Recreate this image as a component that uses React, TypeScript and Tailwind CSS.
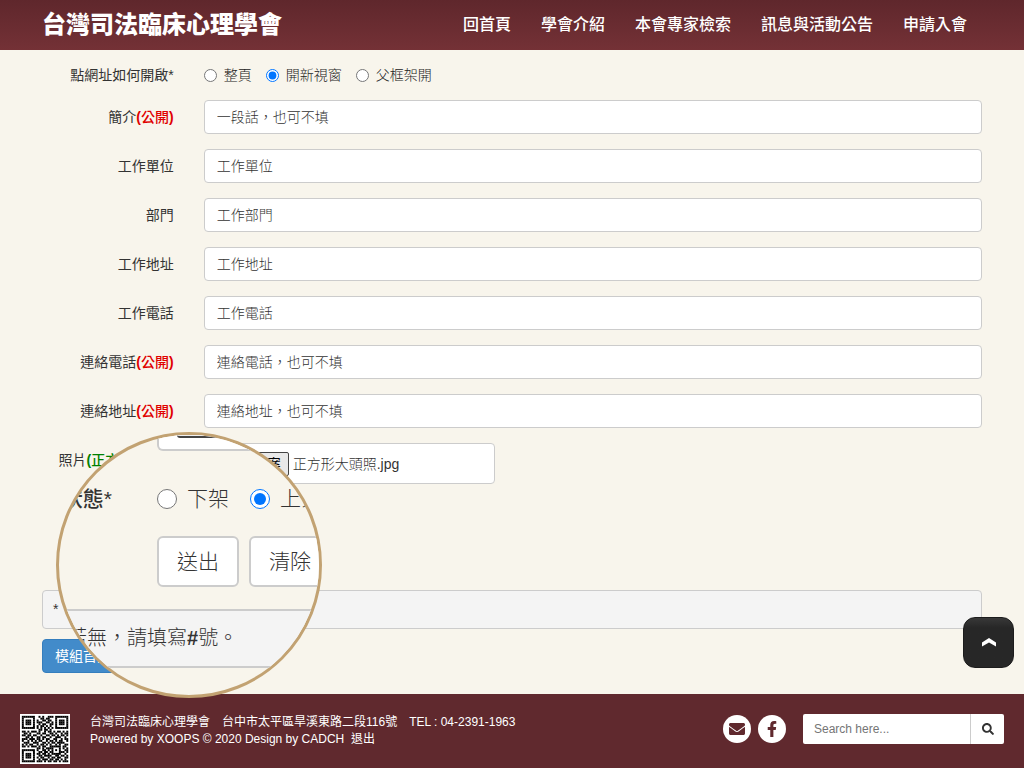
import { FaEnvelope, FaFacebookF, FaSearch } from "react-icons/fa";

const navItems = ["回首頁", "學會介紹", "本會專家檢索", "訊息與活動公告", "申請入會"];

const targets = [
    { id: "blank-self", label: "整頁" },
    { id: "blank-new", label: "開新視窗" },
    { id: "blank-parent", label: "父框架開" },
];

const fields = [
    { id: "intro", label: "簡介", isPublic: true, placeholder: "一段話，也可不填" },
    { id: "company", label: "工作單位", isPublic: false, placeholder: "工作單位" },
    { id: "department", label: "部門", isPublic: false, placeholder: "工作部門" },
    { id: "address", label: "工作地址", isPublic: false, placeholder: "工作地址" },
    { id: "office-tel", label: "工作電話", isPublic: false, placeholder: "工作電話" },
    { id: "tel", label: "連絡電話", isPublic: true, placeholder: "連絡電話，也可不填" },
    { id: "contact", label: "連絡地址", isPublic: true, placeholder: "連絡地址，也可不填" },
];

const qrRows = [
    "1111111001010011101111111",
    "1000001000110110001000001",
    "1011101010011011001011101",
    "1011101011100110101011101",
    "1011101001011001101011101",
    "1000001010110101001000001",
    "1111111010101010101111111",
    "0000000001101101000000000",
    "1101011101001011010110101",
    "0110100011011001101001011",
    "1101101100100110110101101",
    "0011010011011001001110010",
    "1110111011010110011001011",
    "1001010101100101101011001",
    "0111001110011010110111100",
    "1010110010110101001010011",
    "1101011101011001111110110",
    "0000000011010111100010101",
    "1111111010011010101010011",
    "1000001001101101100011101",
    "1011101011011010111110010",
    "1011101001101111001101101",
    "1011101010110010110110011",
    "1000001001011101101101010",
    "1111111011101011011010111",
];

function QrCode() {
    return (
        <svg viewBox="-1 -1 27 27" className="size-[50px] shrink-0 bg-white" aria-label="QR Code">
            {qrRows.map((row, y) =>
                row.split("").map((cell, x) =>
                    cell === "1" ? <rect key={`${x}-${y}`} x={x} y={y} width="1.05" height="1.05" /> : null
                )
            )}
        </svg>
    );
}

function Header() {
    return (
        <header className="bg-linear-to-b from-[#5f272c] to-[#743136]">
            <div className="mx-auto flex h-[50px] max-w-[970px] items-center justify-between px-[15px]">
                <a href="#" className="text-2xl font-black text-white">台灣司法臨床心理學會</a>
                <nav className="flex">
                    {navItems.map((item) => (
                        <a key={item} href="#" className="px-[15px] text-base font-medium text-white">
                            {item}
                        </a>
                    ))}
                </nav>
            </div>
        </header>
    );
}

// Magnifying glass over the bottom-left corner of the form
function Magnifier() {
    return (
        <div className="absolute -bottom-1 left-[29px] size-[266px] overflow-hidden rounded-full border-3 border-[#c2a272] bg-[#f8f5ec] text-[#333]">
            <div className="ml-[98px] h-4 w-[280px] rounded-b-md border-2 border-t-0 border-[#ccc] bg-white pl-[18px]">
                <div className="h-[3px] w-20 rounded-b-sm border-b-2 border-[#444] bg-[#efefef]" />
            </div>
            <div className="mt-8 flex h-8 w-[400px] items-center text-[21px]">
                <span className="w-[53px] shrink-0 text-right font-medium whitespace-nowrap [direction:rtl]">
                    <bdi>狀態*</bdi>
                </span>
                <input type="radio" name="status" id="status-off" className="ml-[45px] size-5" />
                <label htmlFor="status-off" className="ml-2.5 font-light">下架</label>
                <input type="radio" name="status" id="status-on" defaultChecked className="ml-[21px] size-5" />
                <label htmlFor="status-on" className="ml-2.5 font-light">上架</label>
            </div>
            <div className="mt-[21px] ml-[98px] flex w-[200px] gap-2.5 text-[21px] font-light">
                <button type="submit" className="h-[51px] rounded-md border-2 border-[#ccc] bg-white px-[18px] whitespace-nowrap">送出</button>
                <button type="reset" className="h-[51px] rounded-md border-2 border-[#ccc] bg-white px-[18px] whitespace-nowrap">清除</button>
            </div>
            <div className="mt-[22px] flex h-[59px] w-[400px] items-center border-y-2 border-[#ccc] bg-[#f4f4f4] pl-2 text-[20px] font-light">
                若無，請填寫<span className="font-bold">#</span>號。
            </div>
        </div>
    );
}

function ProfileForm() {
    return (
        <main className="relative mx-auto w-full max-w-[970px] pt-[15px] pb-[21px] text-sm text-[#333]">
            <fieldset className="mb-[15px] flex h-5 items-center">
                <legend className="float-left w-1/6 px-[15px] text-right">點網址如何開啟*</legend>
                <div className="flex flex-1 items-center gap-3.5 px-[15px]">
                    {targets.map((target) => (
                        <label key={target.id} htmlFor={target.id} className="flex items-center gap-[7px] font-light text-[#222]">
                            <input type="radio" name="target" id={target.id} defaultChecked={target.id === "blank-new"} className="size-[13px]" />
                            {target.label}
                        </label>
                    ))}
                </div>
            </fieldset>
            {fields.map((field) => (
                <div key={field.id} className="mb-[15px] flex items-center">
                    <label htmlFor={field.id} className="w-1/6 px-[15px] text-right">
                        {field.label}
                        {field.isPublic && (
                            <b className="text-[#e00000]">(<span className="font-medium">公開</span>)</b>
                        )}
                    </label>
                    <div className="flex-1 px-[15px]">
                        <input
                            id={field.id}
                            type="text"
                            placeholder={field.placeholder}
                            className="block h-[34px] w-full rounded-sm border border-[#ccc] bg-white px-3 font-light placeholder:text-[#333]"
                        />
                    </div>
                </div>
            ))}
            <div className="flex">
                <label htmlFor="photo" className="w-1/6 px-[15px] pt-[7px] text-right whitespace-nowrap">
                    照片<b className="text-[green]">(<span className="font-medium">正方形, 公開</span>)</b>
                </label>
                <div className="px-[15px]">
                    <div className="flex h-[41px] w-[291px] items-center gap-1 rounded-sm border border-[#ccc] bg-white px-3 font-light text-[#333]">
                        <button type="button" id="photo" className="h-6 rounded-xs border border-[#444] bg-[#e9e9e9] px-[7px] font-normal text-black">選擇檔案</button>
                        正方形大頭照.jpg
                    </div>
                </div>
            </div>
            <div className="mx-[15px] mt-[106px] mb-2.5 h-[39px] rounded-sm border border-[#ccc] bg-[#f4f4f4] px-2.5 py-2">*</div>
            <a href="#" className="ml-[15px] inline-flex h-[34px] items-center rounded-sm border border-[#357ebd] bg-[#428bca] px-3 text-white">
                模組首頁
            </a>
            <Magnifier />
        </main>
    );
}

function Footer() {
    return (
        <footer className="flex grow items-start bg-[#60292e] px-5 pt-5 pb-1 text-white">
            <QrCode />
            <div className="ml-5 text-xs leading-[17px] whitespace-pre">
                <p>台灣司法臨床心理學會　台中市太平區旱溪東路二段116號　TEL : 04-2391-1963</p>
                <p>Powered by XOOPS © 2020 Design by CADCH  <a href="#">退出</a></p>
            </div>
            <div className="ml-auto flex items-center">
                <a href="#" aria-label="Email" className="grid size-7 place-items-center rounded-full bg-white text-[#60292e]">
                    <FaEnvelope size={16} />
                </a>
                <a href="#" aria-label="Facebook" className="ml-[7px] grid size-7 place-items-center rounded-full bg-white text-[#60292e]">
                    <FaFacebookF size={16} />
                </a>
                <form className="ml-[17px] flex h-[30px] overflow-hidden rounded-xs bg-white text-xs">
                    <input type="search" aria-label="Search" placeholder="Search here..." className="w-[167px] px-[11px] placeholder:text-[#757575]" />
                    <button type="button" aria-label="Search" className="grid w-[34px] place-items-center border-l border-[#ccc] text-[#333]">
                        <FaSearch size={12} />
                    </button>
                </form>
            </div>
        </footer>
    );
}

export default function App() {
    return (
        <div className="flex min-h-screen flex-col bg-[#f8f5ec] font-['Liberation_Sans','Noto_Sans_CJK_TC',sans-serif]">
            <Header />
            <ProfileForm />
            <Footer />
            <button
                type="button"
                aria-label="Top"
                className="fixed right-2.5 bottom-[100px] grid size-[51px] place-items-center rounded-xl border border-[#1c1c1c] bg-linear-to-b from-[#383838] via-[#272727] via-20% to-[#272727] text-white"
            >
                <svg viewBox="0 0 14 9" className="h-[9px] w-3.5" fill="currentColor">
                    <path d="M7 0 14 4.5V8.5L7 4.5 0 8.5V4.5Z" />
                </svg>
            </button>
        </div>
    );
}
